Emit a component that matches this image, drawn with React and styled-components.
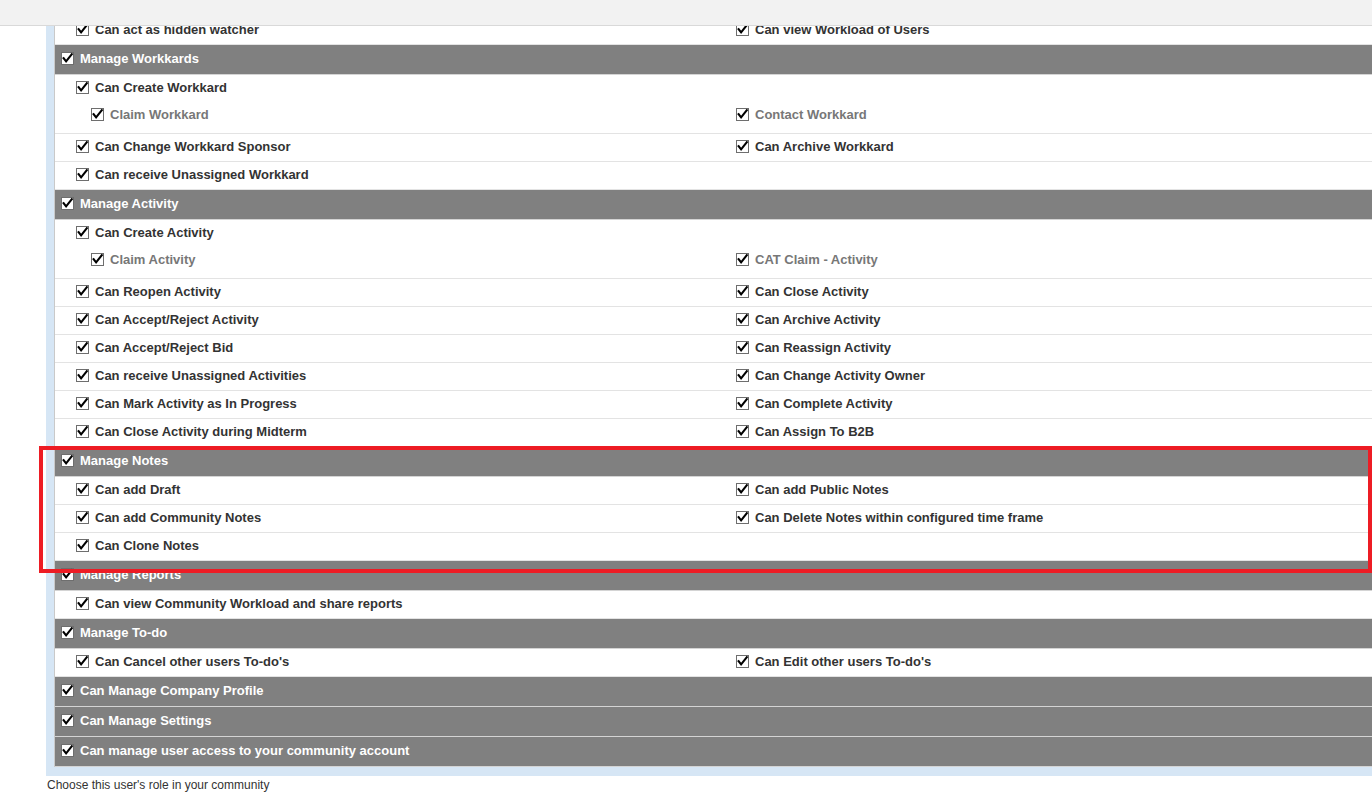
import styled, { createGlobalStyle } from 'styled-components';

const GlobalStyle = createGlobalStyle`
  html, body {
    margin: 0;
    padding: 0;
    background: #fff;
    overflow: hidden;
    font-family: 'Liberation Sans', Arial, sans-serif;
  }
`;

const sections = [
  {
    rows: [['Can act as hidden watcher', 'Can view Workload of Users']],
  },
  {
    title: 'Manage Workkards',
    group: { main: 'Can Create Workkard', subs: ['Claim Workkard', 'Contact Workkard'] },
    rows: [
      ['Can Change Workkard Sponsor', 'Can Archive Workkard'],
      ['Can receive Unassigned Workkard', null],
    ],
  },
  {
    title: 'Manage Activity',
    group: { main: 'Can Create Activity', subs: ['Claim Activity', 'CAT Claim - Activity'] },
    rows: [
      ['Can Reopen Activity', 'Can Close Activity'],
      ['Can Accept/Reject Activity', 'Can Archive Activity'],
      ['Can Accept/Reject Bid', 'Can Reassign Activity'],
      ['Can receive Unassigned Activities', 'Can Change Activity Owner'],
      ['Can Mark Activity as In Progress', 'Can Complete Activity'],
      ['Can Close Activity during Midterm', 'Can Assign To B2B'],
    ],
  },
  {
    title: 'Manage Notes',
    rows: [
      ['Can add Draft', 'Can add Public Notes'],
      ['Can add Community Notes', 'Can Delete Notes within configured time frame'],
      ['Can Clone Notes', null],
    ],
  },
  {
    title: 'Manage Reports',
    rows: [['Can view Community Workload and share reports', null]],
  },
  {
    title: 'Manage To-do',
    rows: [["Can Cancel other users To-do's", "Can Edit other users To-do's"]],
  },
  { title: 'Can Manage Company Profile', rows: [] },
  { title: 'Can Manage Settings', rows: [] },
  { title: 'Can manage user access to your community account', rows: [] },
];

function Tick() {
  return (
    <Box width="13" height="13" viewBox="0 0 13 13">
      <rect x="0.5" y="0.5" width="12" height="12" fill="#fff" stroke="#6e6e6e" />
      <path d="M2.6 6.2 L5.1 9.4 L10.8 2.2" fill="none" stroke="#000" strokeWidth="2.1" strokeLinecap="square" />
    </Box>
  );
}

function Item({ label, sub, right }) {
  if (!label) return <Cell $right={right} />;
  return (
    <Cell $sub={sub} $right={right}>
      <Tick />
      <span>{label}</span>
    </Cell>
  );
}

export default function App() {
  return (
    <>
      <GlobalStyle />
      <TopBar />
      <Page>
        <Panel>
          <Table>
            {sections.map((s, i) => (
              <div key={i}>
                {s.title && (
                  <Header>
                    <Tick />
                    <span>{s.title}</span>
                  </Header>
                )}
                {s.group && (
                  <Group>
                    <MainLine>
                      <Item label={s.group.main} />
                    </MainLine>
                    <SubLine>
                      <Item label={s.group.subs[0]} sub />
                      <Item label={s.group.subs[1]} sub right />
                    </SubLine>
                  </Group>
                )}
                {s.rows.map((r, j) => (
                  <Row key={j}>
                    <Item label={r[0]} />
                    <Item label={r[1]} right />
                  </Row>
                ))}
              </div>
            ))}
          </Table>
        </Panel>
        <FootNote>Choose this user's role in your community</FootNote>
        <Highlight />
      </Page>
    </>
  );
}

const TopBar = styled.div`
  position: fixed;
  top: 0;
  left: 0;
  right: 0;
  height: 25px;
  background: #f2f2f2;
  border-bottom: 1px solid #d9d9d9;
  z-index: 3;
`;

const Page = styled.div`
  position: relative;
  padding-top: 17px;
`;

const Panel = styled.div`
  margin-left: 46px;
  padding: 0 0 9px 8px;
  background: #d6e6f5;
`;

const Table = styled.div`
  background: #fff;
  border-left: 1px solid #c9c9c9;
`;

const Header = styled.div`
  box-sizing: border-box;
  display: flex;
  align-items: center;
  gap: 6px;
  height: 30px;
  padding: 0 0 2px 6px;
  background: #808080;
  border-bottom: 1px solid #d4d4d4;
  color: #fff;
  font-size: 13px;
  font-weight: bold;
`;

const Row = styled.div`
  display: grid;
  grid-template-columns: 660px 1fr;
  height: 27px;
  border-bottom: 1px solid #e3e3e3;
`;

const Group = styled.div`
  border-bottom: 1px solid #e3e3e3;
`;

const MainLine = styled.div`
  display: flex;
  height: 27px;
`;

const SubLine = styled.div`
  display: grid;
  grid-template-columns: 660px 1fr;
  height: 22px;
  padding-bottom: 9px;
`;

const Cell = styled.div`
  box-sizing: border-box;
  display: flex;
  align-items: center;
  gap: 6px;
  padding: ${(p) => (p.$sub ? '2px 0 0' : '0 0 2px')};
  padding-left: ${(p) => (p.$sub && !p.$right ? '36px' : '21px')};
  color: ${(p) => (p.$sub ? '#777' : '#333')};
  font-size: 13px;
  font-weight: bold;
  white-space: nowrap;
`;

const Box = styled.svg`
  flex: none;
  display: block;
`;

const FootNote = styled.div`
  margin: 2px 0 0 47px;
  font-size: 12px;
  line-height: 14px;
  color: #333;
`;

const Highlight = styled.div`
  position: absolute;
  left: 39px;
  top: 446px;
  width: 1333px;
  height: 127px;
  box-sizing: border-box;
  border: 4px solid #ed1c24;
  pointer-events: none;
  z-index: 2;
`;
